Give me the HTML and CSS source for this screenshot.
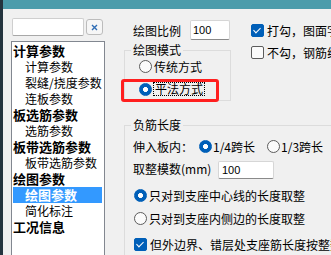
FILE: index.html
```html
<!DOCTYPE html>
<html lang="zh-CN">

<head>
    <meta charset="UTF-8">
    <title>绘图参数</title>
    <link rel="stylesheet" href="styles.css">
</head>

<body>

    <!-- Barre de titre -->
    <div class="titlebar"></div>

    <div class="window">
        <!-- Colonne de gauche : recherche + arbre -->
        <div class="sidebar">
            <div class="search-row">
                <input class="search-box" type="text">
                <button class="clear-btn">
                    <svg width="7" height="7" viewBox="0 0 7 7">
                        <path d="M1 1L6 6M6 1L1 6" stroke="#2f6db5" stroke-width="1.4" fill="none"/>
                    </svg>
                </button>
            </div>
            <ul class="tree">
                <li class="root">计算参数</li>
                <li class="child">计算参数</li>
                <li class="child">裂缝/挠度参数</li>
                <li class="child">连板参数</li>
                <li class="root">板选筋参数</li>
                <li class="child">选筋参数</li>
                <li class="root">板带选筋参数</li>
                <li class="child">板带选筋参数</li>
                <li class="root">绘图参数</li>
                <li class="child selected">绘图参数</li>
                <li class="child">简化标注</li>
                <li class="root">工况信息</li>
            </ul>
        </div>

        <!-- Zone des paramètres -->
        <div class="content">
            <div class="top-area">
                <div class="left-col">
                    <div class="field-row">
                        <span class="field-label">绘图比例</span>
                        <input class="num-input scale-input" type="text" value="100">
                    </div>
                    <fieldset class="group group-mode">
                        <legend>绘图模式</legend>
                        <label class="opt"><span class="radio"></span>传统方式</label>
                        <label class="opt opt-marked">
                            <span class="radio checked"></span><span class="focus-text">平法方式</span>
                            <span class="mark"></span>
                        </label>
                    </fieldset>
                </div>
                <div class="right-col">
                    <label class="opt"><span class="check checked"></span>打勾，图面字体统一</label>
                    <label class="opt"><span class="check"></span>不勾，钢筋线条</label>
                </div>
            </div>

            <fieldset class="group group-len">
                <legend>负筋长度</legend>
                <div class="opt row-a">
                    <span class="len-label">伸入板内：</span>
                    <span class="radio checked"></span>1/4跨长
                    <span class="radio second"></span>1/3跨长
                </div>
                <div class="opt row-b">
                    <span class="mod-label">取整模数(mm)</span>
                    <input class="num-input mod-input" type="text" value="100">
                </div>
                <label class="opt row-c"><span class="radio checked"></span>只对到支座中心线的长度取整</label>
                <label class="opt row-d"><span class="radio"></span>只对到支座内侧边的长度取整</label>
                <label class="opt row-e"><span class="check checked"></span>但外边界、错层处支座筋长度按整数取整</label>
            </fieldset>
        </div>
    </div>

</body>

</html>
```

FILE: styles.css
```css
/* Style global */
body, html {
    margin: 0;
    padding: 0;
    height: 100%;
    overflow: hidden;
}

body {
    font-family: "Noto Sans CJK SC", sans-serif;
    font-size: 12px;
    color: #000;
    background-color: #24343e;
}

.titlebar {
    height: 9px;
    margin-left: 3px;
    background-color: #4b9cab;
}

.window {
    display: flex;
    margin-left: 3px;
    height: 246px;
    background-color: #f0f0f0;
    white-space: nowrap;
}

/* Colonne de gauche */
.sidebar {
    flex: none;
    width: 94px;
    padding: 9px 0 0 8px;
}

.search-row {
    display: flex;
    align-items: center;
    height: 18px;
    margin-left: 1px;
}

.search-box {
    box-sizing: border-box;
    width: 72px;
    height: 18px;
    margin: 0;
    border: 1px solid #cfcfcf;
    border-bottom-color: #a8a8a8;
    border-radius: 2px;
    background-color: #fff;
}

.clear-btn {
    box-sizing: border-box;
    width: 17px;
    height: 16px;
    margin: 0 0 0 2px;
    padding: 0;
    border: 1px solid #bcbcbc;
    border-radius: 3px;
    background-color: #f6f6f6;
    display: flex;
    align-items: center;
    justify-content: center;
}

.tree {
    box-sizing: border-box;
    width: 94px;
    height: 260px;
    margin: 5px 0 0;
    padding: 1px 2px 0 1px;
    list-style: none;
    border: 1px solid #828790;
    background-color: #fff;
}

.tree li {
    height: 16px;
    line-height: 16px;
}

.tree .root {
    font-size: 13px;
    font-weight: bold;
}

.tree .child {
    padding-left: 12px;
}

.tree .selected {
    background-color: #3399ff;
    color: #fff;
    font-size: 13px;
    font-weight: bold;
}

/* Zone des paramètres */
.content {
    flex: 1;
    padding: 11px 0 0 19px;
}

.top-area {
    display: flex;
}

.left-col {
    flex: none;
    width: 107px;
}

.right-col {
    display: flex;
    flex-direction: column;
    gap: 2px;
    margin-left: 20px;
}

.field-row {
    display: flex;
    align-items: center;
    height: 20px;
    padding-left: 9px;
}

.field-label {
    width: 57px;
}

.num-input {
    box-sizing: border-box;
    margin: 0;
    border: 1px solid #d6d6d6;
    border-bottom-color: #8a8a8a;
    border-radius: 2px;
    background-color: #fff;
    font-family: "Liberation Sans", sans-serif;
    font-size: 11px;
    color: #000;
}

.scale-input {
    width: 40px;
    height: 20px;
    padding: 0 2px;
}

.mod-input {
    width: 56px;
    height: 18px;
    padding: 0 3px;
    margin-top: 2px;
}

/* Cadres de groupe */
.group {
    box-sizing: border-box;
    margin: 0;
    padding: 0 0 0 6px;
    border: 1px solid #dcdcdc;
}

.group legend {
    padding: 0 2px;
    line-height: 16px;
}

.group-mode {
    width: 107px;
    margin-top: 2px;
    padding-bottom: 3px;
}

.group-mode .opt {
    height: 16px;
    margin-left: 8px;
}

.group-mode .opt-marked {
    margin-top: 7px;
}

.group-len {
    width: 420px;
    margin-top: 16px;
    height: 200px;
}

/* Options */
.opt {
    display: flex;
    align-items: center;
    height: 20px;
    position: relative;
}

.radio,
.check {
    flex: none;
    box-sizing: border-box;
    width: 13px;
    height: 13px;
    margin-right: 2px;
    border: 1px solid #5c5c5c;
    background-color: #fbfbfb;
}

.radio {
    border-radius: 50%;
}

.radio.checked {
    border-color: #005fb8;
    background: radial-gradient(circle, #fff 0 2.2px, #005fb8 2.8px);
}

.check {
    margin-right: 3px;
    border-radius: 2px;
}

.check.checked {
    border-color: #005fb8;
    background-color: #005fb8;
    position: relative;
}

.check.checked::after {
    content: "";
    position: absolute;
    left: 3px;
    top: 1px;
    width: 3px;
    height: 6px;
    border: solid #fff;
    border-width: 0 1px 1px 0;
    transform: rotate(45deg);
}

.focus-text {
    margin-left: -1px;
    padding: 0 1px;
    line-height: 12px;
    border: 1px dotted #000;
}

/* Cadre rouge d'annotation */
.mark {
    position: absolute;
    left: -18px;
    top: -2px;
    box-sizing: border-box;
    width: 98px;
    height: 23px;
    border: 3px solid #ff1f1f;
    border-radius: 3px;
}

.row-a {
    margin: 3px 0 0 2px;
}

.len-label {
    width: 66px;
}

.row-a .radio {
    margin-right: 1px;
}

.row-a .second {
    margin-left: 12px;
}

.row-b {
    margin: 3px 0 0 2px;
    align-items: flex-start;
}

.row-b .mod-label {
    width: 85px;
    line-height: 20px;
}

.row-c,
.row-e {
    margin: 6px 0 0 3px;
}

.row-d {
    margin: 3px 0 0 3px;
}
```
